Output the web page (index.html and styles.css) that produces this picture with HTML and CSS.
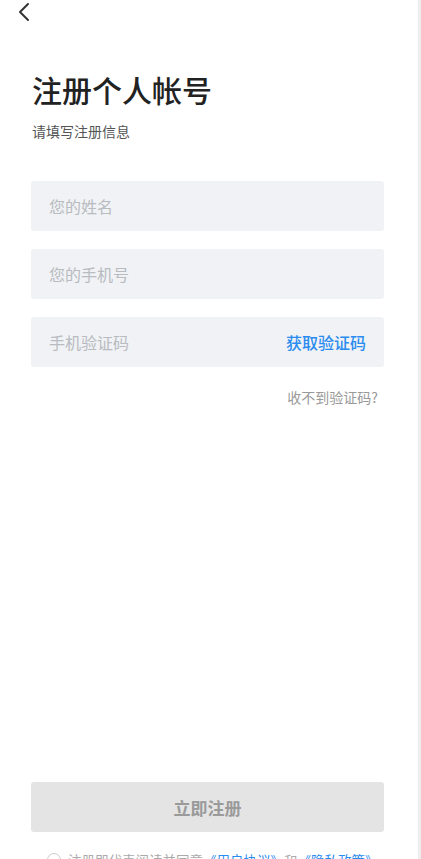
FILE: index.html
```html
<!DOCTYPE html>
<html lang="zh-CN">
<head>
  <meta charset="UTF-8" />
  <meta name="viewport" content="width=device-width, initial-scale=1.0"/>
  <title>注册个人帐号</title>
  <link rel="stylesheet" href="styles.css">
</head>
<body>
  <div class="page">
    <div class="topbar">
      <svg class="back" width="14" height="20" viewBox="0 0 14 20">
        <path d="M11 2 L3 10 L11 18" fill="none" stroke="#333" stroke-width="2" stroke-linecap="round" stroke-linejoin="round"/>
      </svg>
    </div>

    <h1 class="title">注册个人帐号</h1>
    <p class="subtitle">请填写注册信息</p>

    <div class="form">
      <div class="field"><input type="text" placeholder="您的姓名" /></div>
      <div class="field"><input type="tel" placeholder="您的手机号" /></div>
      <div class="field">
        <input type="text" placeholder="手机验证码" />
        <span class="get-code">获取验证码</span>
      </div>
    </div>
    <div class="help">收不到验证码?</div>

    <div class="footer">
      <button class="submit" disabled>立即注册</button>
      <div class="agree">
        <span class="check"></span>
        <span>注册即代表阅读并同意<a href="#">《用户协议》</a>和<a href="#">《隐私政策》</a></span>
      </div>
    </div>
  </div>
</body>
</html>
```

FILE: styles.css
```css
html, body {
  margin: 0;
  height: 859px;
  overflow: hidden;
}
body {
  font-family: "Noto Sans CJK SC", "Noto Sans", sans-serif;
  background: #fff;
  border-right: 3px solid #eeeeee;
  box-sizing: border-box;
}
.page {
  display: flex;
  flex-direction: column;
  height: 872px;
  padding: 0 34px 0 31px;
}
.topbar {
  height: 24px;
  margin-left: -14px;
  padding-top: 2px;
}
.back {
  display: block;
}
.title {
  margin: 43px 0 0 1px;
  font-size: 30px;
  font-weight: 500;
  line-height: 40px;
  color: #222;
}
.subtitle {
  margin: 12px 0 0 1px;
  font-size: 14px;
  line-height: 20px;
  color: #555;
}
.form {
  display: flex;
  flex-direction: column;
  gap: 18px;
  margin-top: 40px;
}
.field {
  display: flex;
  align-items: center;
  height: 50px;
  padding: 0 18px;
  background: #f0f2f5;
  border-radius: 3px;
}
.field input {
  flex: 1;
  min-width: 0;
  border: none;
  outline: none;
  background: transparent;
  font-family: inherit;
  font-size: 16px;
  color: #333;
  padding: 0;
}
.field input::placeholder {
  color: #b8bbbf;
}
.get-code {
  font-size: 16px;
  color: #2a8cf0;
  font-weight: 500;
}
.help {
  margin-top: 20px;
  align-self: flex-end;
  margin-right: 6px;
  font-size: 14px;
  line-height: 20px;
  color: #999;
}
.footer {
  margin-top: auto;
}
.submit {
  display: block;
  width: 100%;
  height: 50px;
  border: none;
  border-radius: 3px;
  background: #e4e4e4;
  font-family: inherit;
  font-size: 17px;
  font-weight: 700;
  color: #9a9a9a;
}
.agree {
  display: flex;
  align-items: center;
  gap: 7px;
  margin: 16px 0 0 16px;
  height: 24px;
  font-size: 13.5px;
  color: #aaa;
  white-space: nowrap;
}
.agree a {
  color: #2a8cf0;
  text-decoration: none;
}
.check {
  flex: none;
  width: 12px;
  height: 12px;
  border: 1px solid #ccc;
  border-radius: 50%;
}
```
